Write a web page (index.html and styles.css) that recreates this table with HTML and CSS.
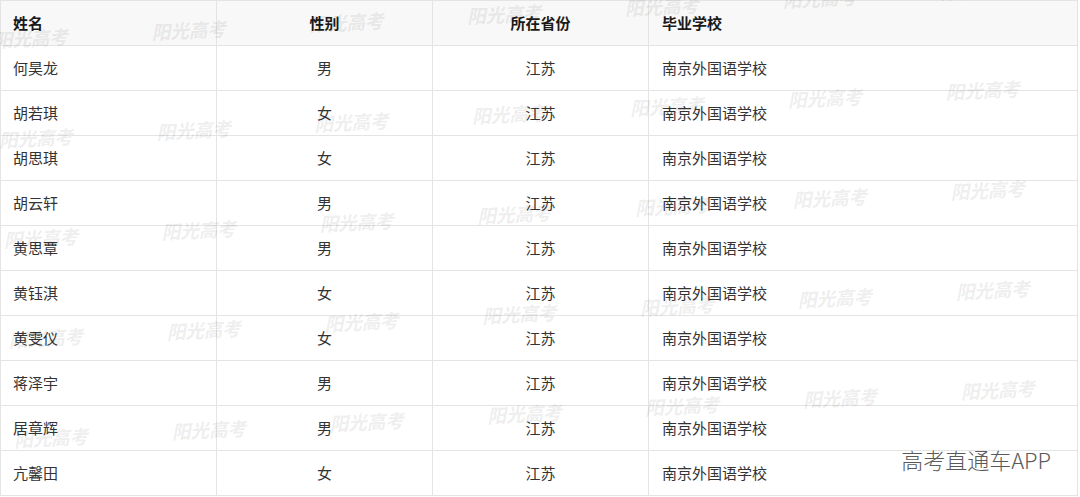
FILE: index.html
```html
<!DOCTYPE html>
<html lang="zh-CN">
<head>
    <meta charset="UTF-8">
    <meta name="viewport" content="width=device-width, initial-scale=1.0">
    <title>南京外国语学校</title>
    <link rel="stylesheet" href="styles.css">
</head>
<body>
    <div class="sheet">
        <table class="roster">
            <thead>
                <tr>
                    <th class="left">姓名</th>
                    <th>性别</th>
                    <th>所在省份</th>
                    <th class="left">毕业学校</th>
                </tr>
            </thead>
            <tbody id="rosterBody"></tbody>
        </table>

        <!-- watermark layer -->
        <div class="marks">
            <div class="mark-grid" id="markGrid"></div>
        </div>

        <div class="brand">高考直通车APP</div>
    </div>

    <script>
        const students = [
            ['何昊龙', '男'],
            ['胡若琪', '女'],
            ['胡思琪', '女'],
            ['胡云轩', '男'],
            ['黄思覃', '男'],
            ['黄钰淇', '女'],
            ['黄雯仪', '女'],
            ['蒋泽宇', '男'],
            ['居章辉', '男'],
            ['亢馨田', '女']
        ];
        const body = document.getElementById('rosterBody');
        students.forEach(([name, sex]) => {
            const row = document.createElement('tr');
            row.innerHTML = `<td class="left">${name}</td><td>${sex}</td><td>江苏</td><td class="left">南京外国语学校</td>`;
            body.appendChild(row);
        });

        const grid = document.getElementById('markGrid');
        for (let i = 0; i < 35; i++) {
            const mark = document.createElement('span');
            mark.className = 'mark';
            mark.textContent = '阳光高考';
            grid.appendChild(mark);
        }
    </script>
</body>
</html>
```

FILE: styles.css
```css
body {
    margin: 0;
    background-color: #ffffff;
    font-family: "Noto Sans CJK SC", "Noto Sans", sans-serif;
    overflow: hidden;
}
.sheet {
    position: relative;
    width: 1080px;
    height: 497px;
    overflow: hidden;
}
.roster {
    border-collapse: collapse;
    width: 1078px;
    table-layout: fixed;
    font-size: 15px;
    color: #333333;
}
.roster th,
.roster td {
    height: 44px;
    padding: 0 12px;
    border: 1px solid #e4e4e4;
    text-align: center;
    line-height: 20px;
    white-space: nowrap;
}
.roster th:nth-child(1),
.roster th:nth-child(2),
.roster th:nth-child(3) {
    width: 191px;
}
.roster th {
    background-color: #f8f8f8;
    font-weight: bold;
    color: #1a1a1a;
}
.roster .left {
    text-align: left;
}
.roster td.left:last-child,
.roster th.left:last-child {
    padding-left: 13px;
}
.marks {
    position: absolute;
    left: 0;
    top: 0;
    width: 1080px;
    height: 497px;
    overflow: hidden;
    pointer-events: none;
}
.mark-grid {
    position: absolute;
    left: -51px;
    top: -9px;
    display: grid;
    grid-template-columns: repeat(7, 158px);
    grid-template-rows: repeat(5, 100px);
    transform: rotate(-2.9deg);
    transform-origin: 0 0;
}
.mark {
    display: flex;
    align-items: center;
    justify-content: center;
    font-size: 19px;
    font-weight: 900;
    font-style: italic;
    letter-spacing: -0.5px;
    color: rgba(0, 0, 0, 0.065);
}
.brand {
    position: absolute;
    right: 29px;
    top: 443px;
    font-size: 22px;
    font-weight: 300;
    color: #5a5a5a;
    text-shadow: 0 0 2px #ffffff, 0 0 1px #ffffff;
}
```
